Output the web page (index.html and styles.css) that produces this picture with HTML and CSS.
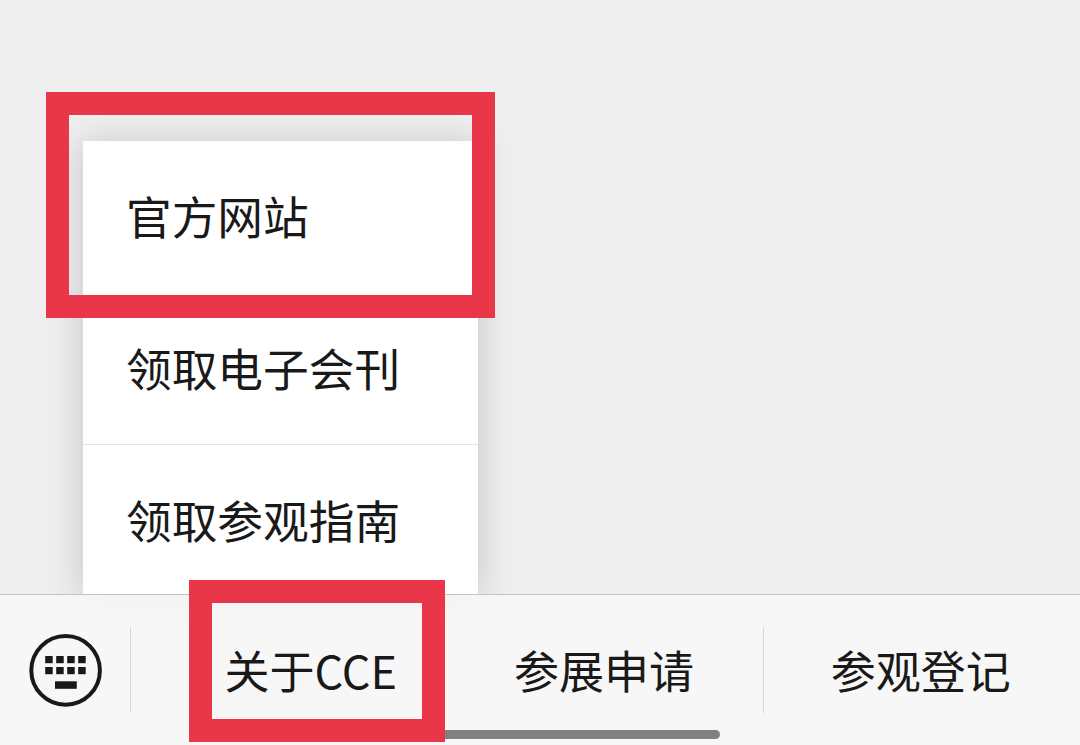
FILE: index.html
```
<!DOCTYPE html>
<html lang="zh-CN">
<head>
    <meta charset="UTF-8">
    <meta name="viewport" content="width=device-width, initial-scale=1.0">
    <title>关于CCE</title>
    <link rel="stylesheet" href="styles.css">
</head>
<body>
    <main class="chat">
        <ul class="submenu">
            <li>官方网站</li>
            <li>领取电子会刊</li>
            <li>领取参观指南</li>
        </ul>
    </main>

    <nav class="toolbar">
        <button class="keyboard" aria-label="键盘">
            <svg width="74" height="74" viewBox="0 0 74 74">
                <circle cx="37.6" cy="37.4" r="34.3" fill="none" stroke="#191919" stroke-width="4"/>
                <g fill="#191919">
                    <rect x="17.2" y="23" width="7.5" height="7.2"/>
                    <rect x="28.2" y="23" width="7.5" height="7.2"/>
                    <rect x="39.2" y="23" width="7.5" height="7.2"/>
                    <rect x="50.2" y="23" width="7.5" height="7.2"/>
                    <rect x="17.2" y="34" width="7.5" height="7.2"/>
                    <rect x="28.2" y="34" width="7.5" height="7.2"/>
                    <rect x="39.2" y="34" width="7.5" height="7.2"/>
                    <rect x="50.2" y="34" width="7.5" height="7.2"/>
                    <rect x="27" y="48.3" width="21.8" height="7.5"/>
                </g>
            </svg>
        </button>
        <div class="tab tab-open">关于CCE</div>
        <div class="tab">参展申请</div>
        <div class="tab">参观登记</div>
    </nav>

    <div class="home-bar"></div>
    <div class="mark mark-site"></div>
    <div class="mark mark-about"></div>
</body>
</html>
```
FILE: styles.css
```
* {
    box-sizing: border-box;
}
body {
    font-family: "Noto Sans CJK SC", sans-serif;
    background-color: #eee;
    color: #191919;
    margin: 0;
    height: 745px;
    display: flex;
    flex-direction: column;
    position: relative;
    overflow: hidden;
}
.chat {
    flex: 1;
    display: flex;
    align-items: flex-end;
    padding-left: 83px;
}
.submenu {
    list-style: none;
    margin: 0;
    padding: 0;
    width: 395px;
    background: white;
    box-shadow: 0 3px 32px rgba(0,0,0,0.18);
}
.submenu li {
    height: 152px;
    padding: 42px 0 0 43px;
    font-size: 45.7px;
    line-height: 66px;
    white-space: nowrap;
}
.submenu li:first-child {
    height: 151px;
    padding-top: 41px;
}
.submenu li:last-child {
    height: 150px;
    padding-top: 41px;
    border-top: 1px solid #e2e2e2;
}
.toolbar {
    height: 151px;
    display: grid;
    grid-template-columns: 130px repeat(3, 1fr);
    align-items: center;
    background: rgba(247,247,247,0.9);
    border-top: 1px solid #c4c4c4;
    position: relative;
}
.keyboard {
    height: 74px;
    padding: 0 0 0 28px;
    border: none;
    background: none;
    display: flex;
}
.tab {
    height: 86px;
    display: flex;
    align-items: center;
    justify-content: center;
    padding-right: 3px;
    border-left: 1px solid #d8d8d8;
    font-size: 45px;
    line-height: 66px;
    white-space: nowrap;
}
.tab-open {
    padding: 0 0 0 44px;
}
.tab-open + .tab {
    border-left-color: transparent;
}
.home-bar {
    position: absolute;
    left: 360px;
    bottom: 6px;
    width: 360px;
    height: 9px;
    border-radius: 5px;
    background: #808080;
}
.mark {
    position: absolute;
    border: 23px solid #e93648;
}
.mark-site {
    left: 46px;
    top: 92px;
    width: 449px;
    height: 226px;
}
.mark-about {
    left: 189px;
    top: 580px;
    width: 256px;
    height: 162px;
}
```
